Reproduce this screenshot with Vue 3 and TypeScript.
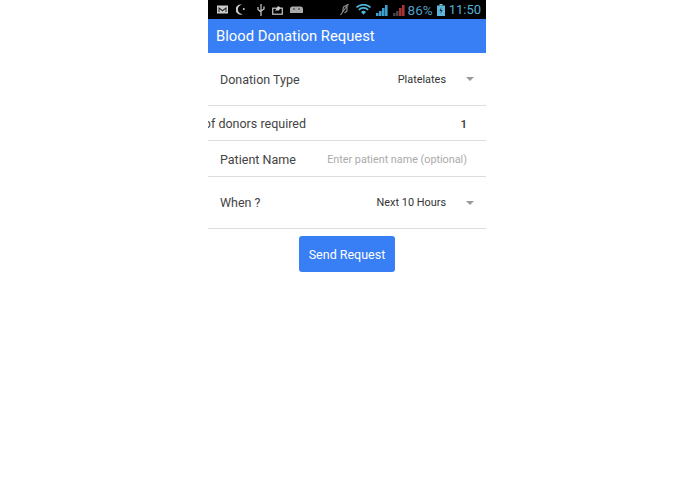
<script setup lang="ts">
const bars = [
  { x: 0, h: 3 },
  { x: 3, h: 5 },
  { x: 6, h: 8 },
  { x: 9, h: 11 },
]
</script>

<template>
  <div class="phone">
    <div class="status-bar">
      <div class="status-left">
        <svg width="11" height="9" viewBox="0 0 11 9">
          <rect x="0" y="0.5" width="11" height="8" fill="#ccc" />
          <path d="M1.5 2 L5.5 5 L9.5 2 V7 H8.5 V4 L5.5 6.5 L2.5 4 V7 H1.5 Z" fill="#222" />
        </svg>
        <svg class="moon" width="9" height="11" viewBox="0 0 9 11">
          <path d="M6 0.8 A5 5 0 1 0 7 10 A4.2 4.2 0 0 1 6 0.8 Z" fill="#ccc" />
          <circle cx="7.8" cy="5" r="1" fill="#ccc" />
        </svg>
        <svg class="usb" width="8" height="12" viewBox="0 0 8 12">
          <path d="M4 0 V12 M1 3 V5.5 L4 8 M7 2.5 V5 L4 7" stroke="#ccc" stroke-width="1.2" fill="none" />
        </svg>
        <svg class="photo" width="11" height="10" viewBox="0 0 11 10">
          <rect x="0.7" y="3.2" width="9.6" height="6" fill="none" stroke="#bbb" stroke-width="1.3" />
          <path d="M3 6 L6 1 L8.5 2.5 L7 5.5 H4 Z" fill="#ccc" />
        </svg>
        <svg class="droid" width="13" height="9" viewBox="0 0 13 9">
          <path d="M0 8 V4 A2.5 2.5 0 0 1 2.5 1.5 H10.5 A2.5 2.5 0 0 1 13 4 V8 Z" fill="#aaa" />
          <circle cx="4" cy="4" r="0.8" fill="#222" />
          <circle cx="9" cy="4" r="0.8" fill="#222" />
        </svg>
      </div>
      <div class="status-right">
        <svg class="mute" width="9" height="13" viewBox="0 0 9 13">
          <path d="M0.5 12 L8.5 1 M2.5 9 L3.5 4 L7 2 V8 L4.5 10" stroke="#888" stroke-width="1.2" fill="none" />
        </svg>
        <svg class="wifi" width="15" height="11" viewBox="0 0 15 11">
          <path d="M0.5 3.5 A10 10 0 0 1 14.5 3.5" stroke="#4fb4dc" stroke-width="1.6" fill="none" />
          <path d="M2.8 5.8 A6.8 6.8 0 0 1 12.2 5.8" stroke="#4fb4dc" stroke-width="1.6" fill="none" />
          <path d="M5 8 A3.6 3.6 0 0 1 10 8 L7.5 10.8 Z" fill="#4fb4dc" />
        </svg>
        <svg class="signal" width="12" height="12" viewBox="0 0 12 12">
          <rect v-for="b in bars" :key="b.x" :x="b.x" :y="12 - b.h" width="2.6" :height="b.h" fill="#3d9fd0" />
        </svg>
        <svg class="signal second" width="12" height="12" viewBox="0 0 12 12">
          <rect v-for="b in bars" :key="b.x" :x="b.x" :y="12 - b.h" width="2.6" :height="b.h" :fill="b.x < 6 ? '#444' : '#a33'" />
        </svg>
        <span class="percent">86%</span>
        <svg class="battery" width="8" height="12" viewBox="0 0 8 12">
          <rect x="2.5" y="0" width="3" height="1.5" fill="#8cc" />
          <rect x="0" y="1.5" width="8" height="10.5" fill="#5bb5dc" />
          <path d="M4.5 3 L2.5 7 H4 L3.5 10 L5.5 6 H4 Z" fill="#123" />
        </svg>
        <span class="clock">11:50</span>
      </div>
    </div>

    <header class="app-bar">Blood Donation Request</header>

    <div class="row row-tall">
      <span class="label">Donation Type</span>
      <div class="select">
        <span class="select-value">Platelates</span>
        <span class="caret"></span>
      </div>
    </div>

    <div class="row row-count">
      <div class="label-clip">
        <span class="label">No of donors required</span>
      </div>
      <span class="count">1</span>
    </div>

    <div class="row row-name">
      <span class="label">Patient Name</span>
      <span class="placeholder">Enter patient name (optional)</span>
    </div>

    <div class="row row-when">
      <span class="label">When ?</span>
      <div class="select">
        <span class="select-value">Next 10 Hours</span>
        <span class="caret"></span>
      </div>
    </div>

    <div class="actions">
      <button class="send" type="button">Send Request</button>
    </div>
  </div>
</template>

<style scoped>
.phone {
  width: 278px;
  height: 494px;
  margin-left: 208px;
  overflow: hidden;
  background: #fff;
  font-family: Roboto, "Liberation Sans", sans-serif;
}

.status-bar {
  height: 19px;
  background: #000;
  display: flex;
  align-items: center;
  justify-content: space-between;
  padding: 0 5px 0 9px;
}

.status-left {
  display: flex;
  align-items: center;
}

.moon {
  margin-left: 8px;
}

.usb {
  margin-left: 11.5px;
}

.photo {
  margin-left: 7.5px;
}

.droid {
  margin-left: 7px;
}

.status-right {
  display: flex;
  align-items: center;
}

.mute {
  margin-right: 7px;
}

.wifi {
  margin-right: 5px;
}

.signal {
  margin-right: 5px;
}

.second {
  margin-right: 3px;
}

.percent {
  font-size: 13.5px;
  color: #4f9fc4;
  margin-right: 4px;
}

.battery {
  margin-right: 4px;
}

.clock {
  font-size: 13px;
  color: #55afd6;
}

.app-bar {
  height: 34px;
  background: #387ef5;
  color: #fff;
  font-size: 14.8px;
  line-height: 35px;
  padding-left: 8px;
}

.row {
  display: flex;
  align-items: center;
  justify-content: space-between;
  padding: 0 19px 0 12px;
  border-bottom: 1px solid #ddd;
  box-sizing: border-box;
}

.row-tall {
  height: 53px;
}

.row-count {
  height: 35px;
  padding-left: 0;
  padding-top: 1px;
}

.row-name {
  height: 36px;
  padding-top: 1px;
}

.row-when {
  height: 52px;
}

.label {
  font-size: 12.5px;
  color: #444;
  white-space: nowrap;
}

.label-clip {
  width: 98px;
  display: flex;
  justify-content: flex-end;
}

.select {
  display: flex;
  align-items: center;
  font-size: 10.9px;
  color: #333;
}

.select-value {
  margin-right: 20px;
}

.caret {
  width: 0;
  height: 0;
  border-left: 4px solid transparent;
  border-right: 4px solid transparent;
  border-top: 4px solid #999;
  margin-right: -7px;
}

.count {
  font-size: 11.5px;
  font-weight: 500;
  color: #333;
}

.placeholder {
  font-size: 10.8px;
  color: #aaa;
}

.actions {
  display: flex;
  justify-content: center;
  padding-top: 7px;
}

.send {
  width: 96px;
  height: 36px;
  border: 0;
  border-radius: 3px;
  background: #387ef5;
  color: #fff;
  font-family: inherit;
  font-size: 12.5px;
  padding: 0;
}
</style>
